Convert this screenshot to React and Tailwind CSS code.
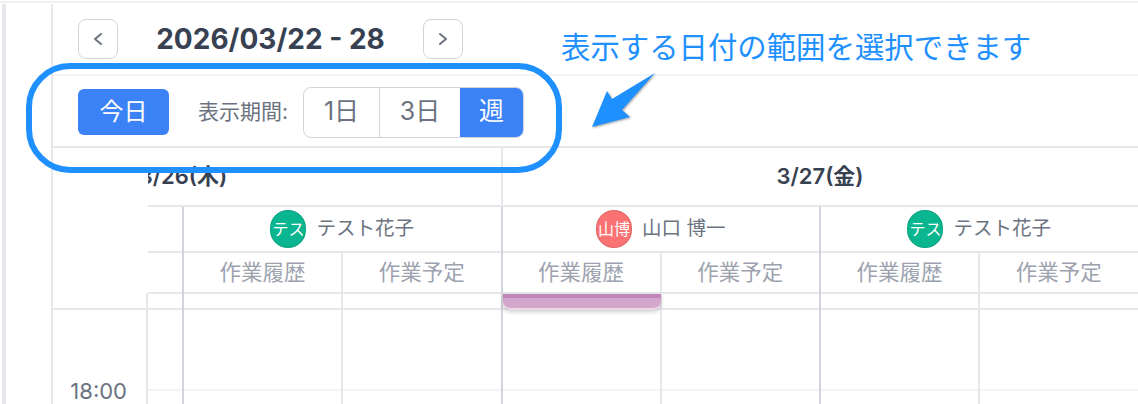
import React from 'react';

const fontStack = 'font-[Inter,"Noto_Sans_CJK_JP",sans-serif]';

const days = [
  {
    label: '3/26(木)',
    staff: [
      { id: 'a' },
      { id: 'b', name: 'テスト花子', short: 'テス', color: 'bg-[#09b68f]' },
    ],
  },
  {
    label: '3/27(金)',
    staff: [
      { id: 'c', name: '山口 博一', short: '山博', color: 'bg-[#fb7272]', event: true },
      { id: 'd', name: 'テスト花子', short: 'テス', color: 'bg-[#09b68f]' },
    ],
  },
];

const Chevron = ({ d }) => (
  <svg width="14" height="16" viewBox="0 0 14 16" fill="none" stroke="#6b7280" strokeWidth="2" strokeLinecap="round" strokeLinejoin="round">
    <path d={d} />
  </svg>
);

const NavButton = ({ d }) => (
  <button className="w-[40px] h-[40px] flex items-center justify-center rounded-lg border border-[#d1d5db] bg-white">
    <Chevron d={d} />
  </button>
);

const StaffColumn = ({ staff }) => (
  <div className="w-[318.5px] shrink-0 border-l-2 border-[#d1d5db] flex flex-col">
    <div className="h-[46px] border-b-2 border-[#e5e7eb] flex items-center justify-center gap-[10px]">
      {staff.name && (
        <>
          <span className={`w-[36px] h-[38px] rounded-full border border-black/10 ${staff.color} text-white text-[16px] flex items-center justify-center`}>
            {staff.short}
          </span>
          <span className="text-[19.5px] leading-none text-[#6b7280]">{staff.name}</span>
        </>
      )}
    </div>
    <div className="flex h-[41px] border-b-2 border-[#e5e7eb]">
      {/* the first column of 3/26 is scrolled out of view, so no labels there */}
      <div className="flex-1 flex items-center justify-center text-[21.5px] text-[#9ca3af]">{staff.name && '作業履歴'}</div>
      <div className="flex-1 border-l-2 border-[#e5e7eb] flex items-center justify-center text-[21.5px] text-[#9ca3af]">{staff.name && '作業予定'}</div>
    </div>
    <div className="flex h-[16px] border-b-2 border-[#e5e7eb]">
      <div className="flex-1 relative">
        {staff.event && (
          <div className="absolute left-0 -right-[1px] top-0 h-[16px] rounded-b-lg border-b-2 border-[#ebdbe8] bg-[#d4a8cc] shadow-[0_2px_4px_rgba(0,0,0,0.2)] overflow-hidden">
            <div className="h-[4px] bg-[#c084b8]" />
          </div>
        )}
      </div>
      <div className="flex-1 border-l-2 border-[#e5e7eb]" />
    </div>
    <div className="flex h-[100px]">
      <div className="flex-1 flex flex-col">
        <div className="h-[81px] border-b-2 border-[#f3f4f6]" />
      </div>
      <div className="flex-1 border-l-2 border-[#e5e7eb] flex flex-col">
        <div className="h-[81px] border-b-2 border-[#f3f4f6]" />
      </div>
    </div>
  </div>
);

const DayColumn = ({ day }) => (
  <div className="w-[637px] shrink-0 flex flex-col">
    <div className="h-[59px] border-b-2 border-l-2 border-[#e5e7eb] flex items-center justify-center text-[22px] font-semibold text-[#374151]">
      {day.label}
    </div>
    <div className="flex">
      {day.staff.map((s) => (
        <StaffColumn key={s.id} staff={s} />
      ))}
    </div>
  </div>
);

export default function App() {
  return (
    <div className={`relative w-[1138px] h-[404px] overflow-hidden bg-white ${fontStack}`}>
      <div className="h-[2px] bg-[#f0f0f0] mt-[1px] mb-[1px]" />
      <div className="flex h-[400px]">
        <div className="w-[2px]" />
        <div className="w-[4px] bg-[#e5e7eb]" />
        <div className="w-[45px]" />
        <div className="flex-1 border-l-2 border-[#e5e7eb] flex flex-col min-w-0">
          <div className="h-[72px] border-b-2 border-[#f3f4f6] flex items-start pl-[25px] pt-[15px] shrink-0">
            <NavButton d="M10 3 L4 8 L10 13" />
            <h1 className="w-[305px] text-center text-[28px] leading-[40px] font-bold text-[#374151]">2026/03/22 - 28</h1>
            <NavButton d="M4 3 L10 8 L4 13" />
          </div>
          <div className="h-[72px] border-b-2 border-[#e5e7eb] flex items-center pl-[25px] pt-[2px] shrink-0">
            <button className="w-[91px] h-[46px] rounded-md bg-[#3b82f6] text-white text-[24px]">今日</button>
            <span className="ml-[29px] text-[21px] text-[#6b7280] w-[105px]">表示期間:</span>
            <div className="flex h-[51px] rounded-lg border border-[#d1d5db] overflow-hidden">
              <div className="w-[76px] flex items-center justify-center text-[25px] text-[#6b7280] border-r border-[#d1d5db]">1日</div>
              <div className="w-[80px] flex items-center justify-center text-[25px] text-[#6b7280]">3日</div>
              <div className="w-[63px] flex items-center justify-center text-[25px] text-white bg-[#3b82f6]">週</div>
            </div>
          </div>
          <div className="flex flex-1 min-h-0">
            <div className="w-[95px] shrink-0 flex flex-col">
              <div className="h-[145px]" />
              <div className="h-[17px] border-r-2 border-b-2 border-[#e5e7eb]" />
              <div className="flex-1 border-r-2 border-[#e5e7eb] relative">
                <span className="block text-right pr-[19px] pt-[68px] text-[22px] leading-[26px] text-[#6b7280]">18:00</span>
              </div>
            </div>
            <div className="flex-1 overflow-hidden min-w-0">
              <div className="flex w-max -ml-[284.5px]">
                {days.map((d) => (
                  <DayColumn key={d.label} day={d} />
                ))}
              </div>
            </div>
          </div>
        </div>
      </div>

      {/* annotation over the screenshot */}
      <div className="absolute left-[26px] top-[63px] w-[536px] h-[110px] rounded-[44px] border-[6px] border-[#1e90ff]" />
      <p className="absolute left-[561px] top-[28px] text-[29.4px] leading-[40px] text-[#1e90ff] whitespace-nowrap">表示する日付の範囲を選択できます</p>
      <svg className="absolute left-[585px] top-[68px]" width="80" height="66" viewBox="0 0 80 66">
        <path
          d="M70 5 L27 31 L22 23 L7 59 L45 49 L37 42 Z"
          fill="#1e90ff"
          style={{ filter: 'drop-shadow(1px 1px 1px rgba(0,0,0,0.35))' }}
        />
      </svg>
    </div>
  );
}
